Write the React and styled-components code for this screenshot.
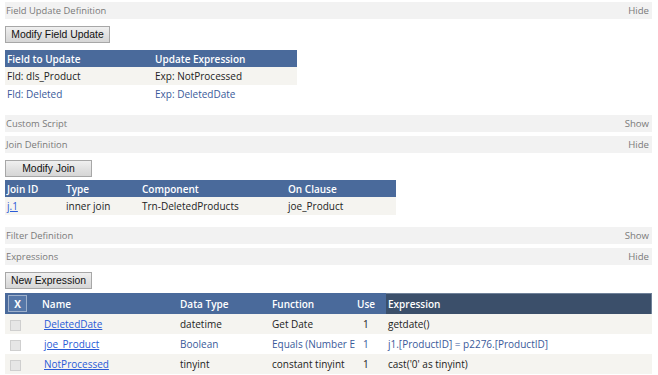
import React from 'react';
import styled, { createGlobalStyle } from 'styled-components';

const GlobalStyle = createGlobalStyle`
  body {
    margin: 0;
    background: #ffffff;
    font-family: "Open Sans", "Noto Sans", sans-serif;
    font-size: 10px;
    color: #222;
  }
`;

const Page = styled.div`
  width: 647px;
  padding: 2px 0 0 5px;
  display: flex;
  flex-direction: column;
`;

const Bar = styled.div`
  height: 17px;
  background: #f2f2f2;
  display: flex;
  align-items: center;
  justify-content: space-between;
  padding: 0 3px 0 1px;
  color: #7a7a7a;
  font-size: 9.4px;
  margin-top: ${p => p.$gap || 0}px;
`;

const Toggle = styled.span`
  color: #7a7a7a;
  font-size: 9.6px;
  cursor: pointer;
`;

const Button = styled.button`
  align-self: flex-start;
  width: ${p => p.$w}px;
  height: 17px;
  margin: 7px 0 ${p => p.$mb}px;
  padding: 0;
  border: 1px solid #a7a7a7;
  background: linear-gradient(180deg, #f0f0f0 0%, #e2e2e2 50%, #d6d6d6 100%);
  font-family: "Liberation Sans", Arial, sans-serif;
  font-size: 10.4px;
  color: #111;
`;

const Table = styled.table`
  width: ${p => p.$w}px;
  border-collapse: collapse;
  table-layout: fixed;
`;

const Th = styled.th`
  background: ${p => (p.$dark ? '#3b4f6a' : '#4a6a9b')};
  color: #fff;
  font-weight: 600;
  text-align: left;
  padding: 0 2px;
  height: ${p => p.$h || 17}px;
  white-space: nowrap;
  overflow: hidden;
  box-shadow: ${p => (p.$dark ? 'inset -1px 0 0 #6f8199, inset 0 1px 0 #6f8199' : 'none')};
`;

const Tr = styled.tr`
  background: ${p => (p.$alt ? '#ffffff' : '#f5f4f0')};
  color: ${p => (p.$alt ? '#3a5a9a' : '#222')};
`;

const Td = styled.td`
  height: ${p => p.$h || 18}px;
  padding: 0 2px 0 ${p => p.$pl || 2}px;
  white-space: nowrap;
  overflow: hidden;
  text-overflow: clip;
`;

const Link = styled.a`
  color: #2a5bd7;
  text-decoration: underline;
  cursor: pointer;
`;

const HeaderCheck = styled.span`
  display: inline-flex;
  align-items: center;
  justify-content: center;
  width: 17px;
  height: 15px;
  border: 1px solid #9fb1cc;
  background: #5677a8;
  color: #fff;
  font-weight: 700;
  margin-left: 1px;
`;

const Check = styled.span`
  display: inline-block;
  width: 9px;
  height: 9px;
  border: 1px solid #cfcfcf;
  background: #e6e6e6;
  margin-left: 3px;
  vertical-align: middle;
`;

const Section = ({ title, toggle, gap }) => (
  <Bar $gap={gap}>
    <span>{title}</span>
    <Toggle>{toggle}</Toggle>
  </Bar>
);

const expressions = [
  { name: 'DeletedDate', type: 'datetime', fn: 'Get Date', use: 1, expr: 'getdate()' },
  { name: 'joe_Product', type: 'Boolean', fn: 'Equals (Number Expressions)', use: 1, expr: 'j1.[ProductID] = p2276.[ProductID]' },
  { name: 'NotProcessed', type: 'tinyint', fn: 'constant tinyint', use: 1, expr: "cast('0' as tinyint)" },
];

export default function App() {
  return (
    <>
      <GlobalStyle />
      <Page>
        <Section title="Field Update Definition" toggle="Hide" />
        <Button $w={105} $mb={7}>Modify Field Update</Button>
        <Table $w={292}>
          <colgroup>
            <col style={{ width: 148 }} />
            <col />
          </colgroup>
          <thead>
            <tr>
              <Th>Field to Update</Th>
              <Th>Update Expression</Th>
            </tr>
          </thead>
          <tbody>
            <Tr>
              <Td>Fld: dls_Product</Td>
              <Td>Exp: NotProcessed</Td>
            </Tr>
            <Tr $alt>
              <Td>Fld: Deleted</Td>
              <Td>Exp: DeletedDate</Td>
            </Tr>
          </tbody>
        </Table>

        <Section title="Custom Script" toggle="Show" gap={12} />
        <Section title="Join Definition" toggle="Hide" gap={4} />
        <Button $w={87} $mb={3}>Modify Join</Button>
        <Table $w={391}>
          <colgroup>
            <col style={{ width: 59 }} />
            <col style={{ width: 76 }} />
            <col style={{ width: 146 }} />
            <col />
          </colgroup>
          <thead>
            <tr>
              <Th>Join ID</Th>
              <Th>Type</Th>
              <Th>Component</Th>
              <Th>On Clause</Th>
            </tr>
          </thead>
          <tbody>
            <Tr>
              <Td><Link>j.1</Link></Td>
              <Td>inner join</Td>
              <Td>Trn-DeletedProducts</Td>
              <Td>joe_Product</Td>
            </Tr>
          </tbody>
        </Table>

        <Section title="Filter Definition" toggle="Show" gap={12} />
        <Section title="Expressions" toggle="Hide" gap={4} />
        <Button $w={87} $mb={4}>New Expression</Button>
        <Table $w={647}>
          <colgroup>
            <col style={{ width: 35 }} />
            <col style={{ width: 138 }} />
            <col style={{ width: 92 }} />
            <col style={{ width: 85 }} />
            <col style={{ width: 31 }} />
            <col />
          </colgroup>
          <thead>
            <tr>
              <Th $h={21}><HeaderCheck>X</HeaderCheck></Th>
              <Th $h={21}>Name</Th>
              <Th $h={21}>Data Type</Th>
              <Th $h={21}>Function</Th>
              <Th $h={21}>Use</Th>
              <Th $h={21} $dark>Expression</Th>
            </tr>
          </thead>
          <tbody>
            {expressions.map((e, i) => (
              <Tr key={e.name} $alt={i % 2 === 1}>
                <Td $h={20}><Check /></Td>
                <Td $h={20} $pl={4}><Link>{e.name}</Link></Td>
                <Td $h={20}>{e.type}</Td>
                <Td $h={20}>{e.fn}</Td>
                <Td $h={20} $pl={8}>{e.use}</Td>
                <Td $h={20}>{e.expr}</Td>
              </Tr>
            ))}
          </tbody>
        </Table>
      </Page>
    </>
  );
}
